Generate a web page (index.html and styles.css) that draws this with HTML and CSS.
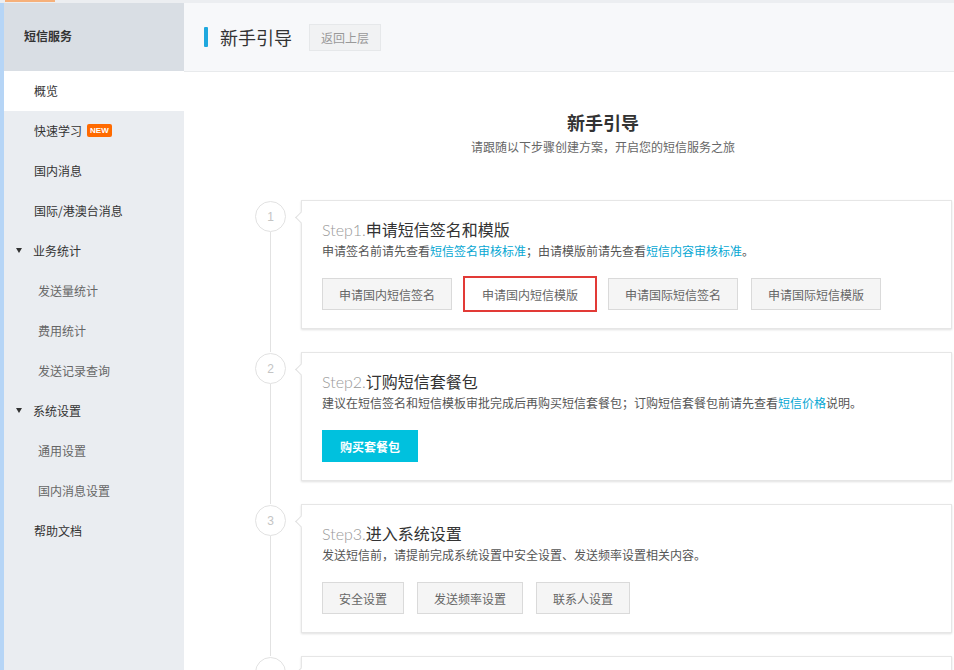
FILE: index.html
```html
<!DOCTYPE html>
<html lang="zh-CN">
<head>
<meta charset="utf-8">
<title>新手引导</title>
<link rel="stylesheet" href="styles.css">
</head>
<body>
<div class="topstrip"><span class="topstrip-mark"></span></div>
<div class="app">
  <aside class="sidebar">
    <div class="side-edge"></div>
    <nav class="side-body">
      <div class="side-head">短信服务</div>
      <ul class="menu">
        <li class="item active">概览</li>
        <li class="item">快速学习<span class="badge">NEW</span></li>
        <li class="item">国内消息</li>
        <li class="item">国际/港澳台消息</li>
        <li class="item group"><span class="caret"></span>业务统计</li>
        <li class="item sub">发送量统计</li>
        <li class="item sub">费用统计</li>
        <li class="item sub">发送记录查询</li>
        <li class="item group"><span class="caret"></span>系统设置</li>
        <li class="item sub">通用设置</li>
        <li class="item sub">国内消息设置</li>
        <li class="item">帮助文档</li>
      </ul>
    </nav>
  </aside>
  <main class="main">
    <header class="pagehead">
      <span class="pagehead-bar"></span>
      <h1 class="pagehead-title">新手引导</h1>
      <button class="btn-back">返回上层</button>
    </header>
    <section class="content">
      <div class="intro">
        <h2 class="intro-title">新手引导</h2>
        <p class="intro-sub">请跟随以下步骤创建方案，开启您的短信服务之旅</p>
      </div>
      <ol class="steps">
        <li class="step">
          <div class="step-num">1</div>
          <div class="card">
            <div class="card-title"><span class="step-tag">Step1.</span>申请短信签名和模版</div>
            <p class="card-desc">申请签名前请先查看<a class="link">短信签名审核标准</a>；由请模版前请先查看<a class="link">短信内容审核标准</a>。</p>
            <div class="actions">
              <button class="btn">申请国内短信签名</button>
              <button class="btn btn-marked">申请国内短信模版</button>
              <button class="btn">申请国际短信签名</button>
              <button class="btn">申请国际短信模版</button>
            </div>
          </div>
        </li>
        <li class="step">
          <div class="step-num">2</div>
          <div class="card">
            <div class="card-title"><span class="step-tag">Step2.</span>订购短信套餐包</div>
            <p class="card-desc">建议在短信签名和短信模板审批完成后再购买短信套餐包；订购短信套餐包前请先查看<a class="link">短信价格</a>说明。</p>
            <div class="actions">
              <button class="btn btn-primary">购买套餐包</button>
            </div>
          </div>
        </li>
        <li class="step">
          <div class="step-num">3</div>
          <div class="card">
            <div class="card-title"><span class="step-tag">Step3.</span>进入系统设置</div>
            <p class="card-desc">发送短信前，请提前完成系统设置中安全设置、发送频率设置相关内容。</p>
            <div class="actions">
              <button class="btn">安全设置</button>
              <button class="btn">发送频率设置</button>
              <button class="btn">联系人设置</button>
            </div>
          </div>
        </li>
        <li class="step step-last">
          <div class="step-num"></div>
          <div class="card card-tall"></div>
        </li>
      </ol>
    </section>
  </main>
</div>
</body>
</html>
```
FILE: styles.css
```css
* { box-sizing: border-box; }
html, body {
  margin: 0;
  padding: 0;
  height: 100%;
  overflow: hidden;
  background: #fff;
  font-family: "Noto Sans CJK SC", "Liberation Sans", sans-serif;
  font-size: 12px;
  color: #333;
}
.topstrip {
  height: 3px;
  background: #eceef1;
}
.topstrip-mark {
  display: block;
  margin-left: 5px;
  width: 50px;
  height: 2px;
  background: #f6b07a;
}
.app {
  display: flex;
  height: calc(100% - 3px);
}
.sidebar {
  width: 184px;
  flex: none;
  display: flex;
  background: #eaedf1;
}
.side-edge {
  width: 4px;
  background: #b6d5f6;
}
.side-body { flex: 1; }
.side-head {
  height: 68px;
  background: #d9dee4;
  padding: 0 0 3px 20px;
  display: flex;
  align-items: center;
  font-weight: bold;
  font-size: 12px;
  color: #333;
}
.menu {
  list-style: none;
  margin: 0;
  padding: 0;
}
.item {
  height: 40px;
  display: flex;
  align-items: center;
  padding: 0 0 2px 30px;
  color: #333;
  font-size: 12px;
}
.item.active { background: #fff; }
.item.sub { padding-left: 34px; color: #666; }
.item.group { padding-left: 12px; }
.caret {
  width: 0;
  height: 0;
  border-left: 3.5px solid transparent;
  border-right: 3.5px solid transparent;
  border-top: 5px solid #333;
  margin-right: 11px;
}
.badge {
  margin-left: 5px;
  background: #ff6a00;
  color: #fff;
  font-family: "Liberation Sans", sans-serif;
  font-weight: bold;
  font-size: 8px;
  line-height: 13px;
  padding: 0 3px;
  border-radius: 2px;
}
.main {
  flex: 1;
  display: flex;
  flex-direction: column;
  min-width: 0;
}
.pagehead {
  height: 69px;
  flex: none;
  background: #f7f8fa;
  border-bottom: 1px solid #e8eaec;
  display: flex;
  align-items: center;
  padding-left: 20px;
}
.pagehead-bar {
  width: 4px;
  height: 20px;
  background: #1fa8de;
  border-radius: 1px;
  margin-right: 12px;
}
.pagehead-title {
  margin: 0;
  font-size: 18px;
  font-weight: normal;
  color: #333;
  margin-right: 17px;
}
.btn-back {
  height: 27px;
  padding: 0 11px;
  background: #f1f2f3;
  border: 1px solid #e6e8ea;
  color: #999;
  font-family: inherit;
  font-size: 12px;
}
.content {
  flex: 1;
  padding: 37px 0 0 68px;
}
.intro { text-align: center; }
.intro-title {
  margin: 0;
  font-size: 18px;
  line-height: 26px;
  font-weight: bold;
  color: #333;
}
.intro-sub {
  margin: 2px 0 0;
  line-height: 20px;
  color: #666;
  font-size: 12px;
}
.steps {
  list-style: none;
  margin: 43px 0 0;
  padding: 0;
}
.step {
  display: flex;
  position: relative;
  margin-bottom: 23px;
}
.step::before {
  content: "";
  position: absolute;
  left: 18px;
  top: 32px;
  bottom: -23px;
  width: 1px;
  background: #e2e2e2;
}
.step-last::before { display: none; }
.step-num {
  width: 31px;
  height: 31px;
  margin: 1px 15px 0 3px;
  border: 1px solid #e2e2e2;
  border-radius: 50%;
  flex: none;
  display: flex;
  align-items: center;
  justify-content: center;
  color: #c4c4c4;
  font-family: "Liberation Sans", sans-serif;
  font-size: 12px;
  background: #fff;
}
.card {
  flex: 1;
  margin-right: 2px;
  background: #fff;
  border: 1px solid #e6e6e6;
  box-shadow: 0 1px 2px rgba(0,0,0,0.12);
  padding: 18px 20px 18px 20px;
  position: relative;
}
.card::before {
  content: "";
  position: absolute;
  left: -5px;
  top: 12px;
  width: 8px;
  height: 8px;
  background: #fff;
  border-left: 1px solid #e0e0e0;
  border-bottom: 1px solid #e0e0e0;
  transform: rotate(45deg);
}
.card-tall { height: 60px; }
.card-title {
  font-size: 16px;
  line-height: 20px;
  color: #333;
}
.step-tag {
  font-family: "Lato", "Liberation Sans", sans-serif;
  font-weight: 300;
  color: #999;
}
.card-desc {
  margin: 1px 0 0;
  line-height: 20px;
  font-size: 12px;
  color: #555;
}
.link { color: #06a7d3; text-decoration: none; }
.actions {
  display: flex;
  gap: 13px;
  margin-top: 17px;
}
.btn {
  height: 32px;
  padding: 0 16px;
  background: #f5f5f5;
  border: 1px solid #dadada;
  color: #666;
  font-family: inherit;
  font-size: 12px;
}
.btn-marked {
  background: #fff;
  border-color: #fff;
  outline: 2px solid #e23a36;
  outline-offset: 0;
}
.btn-primary {
  background: #00c1de;
  border-color: #00c1de;
  color: #fff;
  font-weight: bold;
  padding: 0 17px;
}
```
